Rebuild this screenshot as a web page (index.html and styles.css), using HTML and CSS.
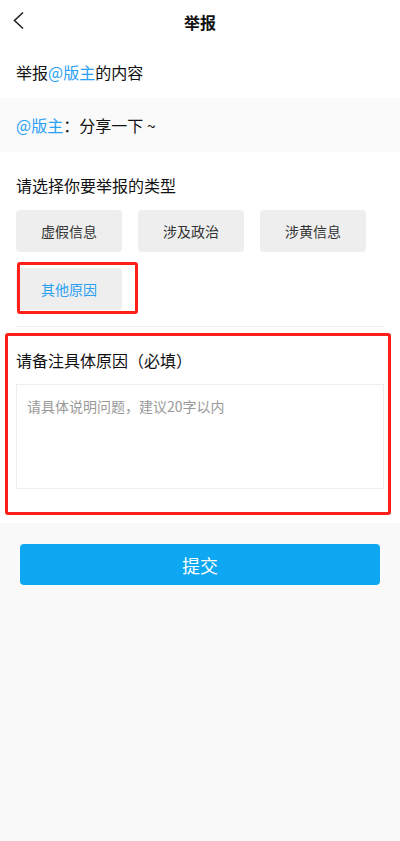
FILE: index.html
```html
<!DOCTYPE html>
<html lang="zh-CN">
    <head>
        <meta charset="UTF-8" />
        <title>举报</title>
        <link rel="stylesheet" href="styles.css">
    </head>
    <body>
        <!-- 상단 헤더 -->
        <div class="hd">
            <a class="back" href="#">
                <svg width="12" height="20" viewBox="0 0 12 20">
                    <polyline points="10,1.5 1.5,9.5 10,17.5" fill="none" stroke="#222" stroke-width="1.6" />
                </svg>
            </a>
            <h1 class="tit">举报</h1>
        </div>

        <div class="target">举报<span class="at">@版主</span>的内容</div>
        <div class="quote"><span class="at">@版主</span>：分享一下 ~</div>

        <div class="report">
            <p class="sub">请选择你要举报的类型</p>
            <div class="types">
                <button class="tp">虚假信息</button>
                <button class="tp">涉及政治</button>
                <button class="tp">涉黄信息</button>
                <button class="tp on">其他原因</button>
            </div>

            <div class="line"></div>

            <p class="sub">请备注具体原因（必填）</p>
            <textarea class="memo" placeholder="请具体说明问题，建议20字以内"></textarea>

            <!-- 빨간 표시 박스 -->
            <span class="mark m1"></span>
            <span class="mark m2"></span>
        </div>

        <div class="foot">
            <button class="submit">提交</button>
        </div>
    </body>
</html>
```

FILE: styles.css
```css
* {
    margin: 0;
    padding: 0;
    box-sizing: border-box;
}

body {
    min-height: 841px;
    font-family: "Noto Sans CJK SC", "Noto Sans", sans-serif;
    font-size: 16px;
    color: #111;
    background-color: #f9f9f9;
}

/* 헤더 */
.hd {
    position: relative;
    height: 44px;
    background-color: #fff;
}
.back {
    position: absolute;
    top: 11px;
    left: 13px;
    display: block;
    width: 12px;
    height: 20px;
}
.back svg {
    display: block;
}
.tit {
    font-size: 16px;
    font-weight: bold;
    line-height: 44px;
    text-align: center;
}

.at {
    color: #2aa0f2;
}

.target {
    height: 54px;
    padding: 17px 16px 0;
    line-height: 22px;
    background-color: #fff;
}

.quote {
    height: 54px;
    padding: 0 16px;
    line-height: 54px;
    background-color: #fafafa;
}

/* 신고 유형 */
.report {
    position: relative;
    padding: 22px 16px 34px;
    background-color: #fff;
}
.sub {
    line-height: 22px;
}
.types {
    display: grid;
    grid-template-columns: repeat(3, 106px);
    gap: 16px;
    margin-top: 14px;
}
.tp {
    height: 42px;
    border: 0;
    border-radius: 4px;
    font-family: inherit;
    font-size: 14px;
    color: #333;
    background-color: #eee;
}
.tp.on {
    color: #2aa0f2;
}

.line {
    height: 1px;
    margin: 16px 0 22px;
    background-color: #eee;
}

.memo {
    display: block;
    width: 100%;
    height: 105px;
    margin-top: 13px;
    padding: 10px;
    border: 1px solid #eee;
    font-family: inherit;
    font-size: 14px;
    line-height: 22px;
    resize: none;
    outline: none;
}
.memo::placeholder {
    color: #999;
}

/* 빨간 표시 */
.mark {
    position: absolute;
    border: 3px solid #ff1f1a;
    border-radius: 3px;
}
.m1 {
    top: 110px;
    left: 17px;
    width: 121px;
    height: 52px;
}
.m2 {
    top: 181px;
    left: 5px;
    width: 386px;
    height: 182px;
}

/* 제출 */
.foot {
    padding: 21px 20px;
}
.submit {
    display: block;
    width: 100%;
    height: 41px;
    border: 0;
    border-radius: 4px;
    font-family: inherit;
    font-size: 18px;
    color: #fff;
    background-color: #0ea7f2;
}
```
